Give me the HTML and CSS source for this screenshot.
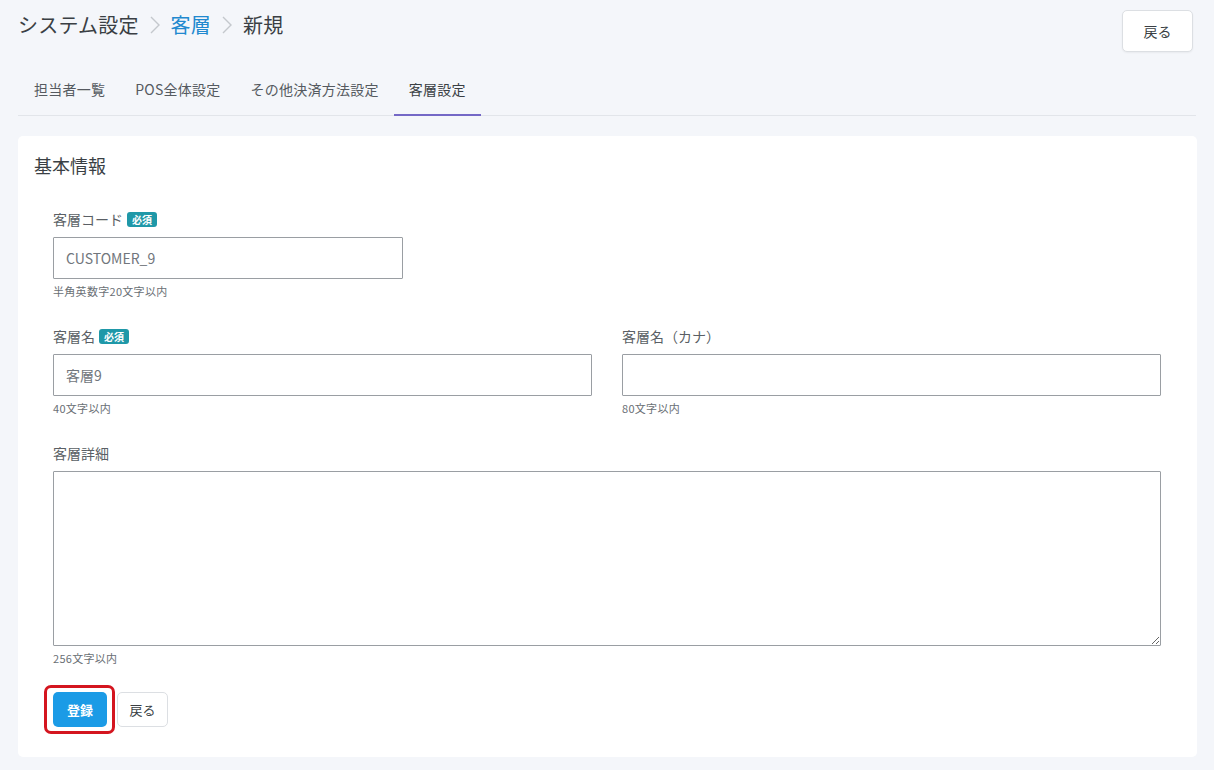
FILE: index.html
```html
<!DOCTYPE html>
<html lang="ja">
<head>
<meta charset="utf-8">
<title>客層 新規</title>
<link rel="stylesheet" href="styles.css">
</head>
<body>
<div class="page">
  <header class="topbar">
    <h1 class="crumbs">
      <span class="crumb">システム設定</span>
      <svg class="chev" width="14" height="20" viewBox="0 0 14 20"><path d="M3 2 L11 10 L3 18" fill="none" stroke="#c4c8cd" stroke-width="1.4"/></svg>
      <span class="crumb link">客層</span>
      <svg class="chev" width="14" height="20" viewBox="0 0 14 20"><path d="M3 2 L11 10 L3 18" fill="none" stroke="#c4c8cd" stroke-width="1.4"/></svg>
      <span class="crumb">新規</span>
    </h1>
    <button class="btn btn-light btn-back-top">戻る</button>
  </header>

  <nav class="tabs">
    <a class="tab">担当者一覧</a>
    <a class="tab">POS全体設定</a>
    <a class="tab">その他決済方法設定</a>
    <a class="tab active">客層設定</a>
  </nav>

  <section class="card">
    <h2 class="card-title">基本情報</h2>
    <div class="fields">
      <div class="row">
        <div class="field half-narrow">
          <label class="label">客層コード<span class="badge">必須</span></label>
          <input class="input" type="text" value="CUSTOMER_9">
          <div class="help">半角英数字20文字以内</div>
        </div>
      </div>
      <div class="row two">
        <div class="field">
          <label class="label">客層名<span class="badge">必須</span></label>
          <input class="input" type="text" value="客層9">
          <div class="help">40文字以内</div>
        </div>
        <div class="field">
          <label class="label">客層名（カナ）</label>
          <input class="input" type="text" value="">
          <div class="help">80文字以内</div>
        </div>
      </div>
      <div class="row">
        <div class="field full">
          <label class="label">客層詳細</label>
          <textarea class="textarea"></textarea>
          <div class="help">256文字以内</div>
        </div>
      </div>
      <div class="actions">
        <span class="highlight"><button class="btn btn-primary">登録</button></span>
        <button class="btn btn-light btn-back">戻る</button>
      </div>
    </div>
  </section>
</div>
</body>
</html>
```

FILE: styles.css
```css
* { box-sizing: border-box; }
html, body { margin: 0; padding: 0; }
body {
  background: #f4f6fa;
  font-family: "Noto Sans CJK JP", "Noto Sans", sans-serif;
  color: #3d4246;
  width: 1214px;
  height: 770px;
  overflow: hidden;
}
.page { padding: 10px 17px 0 18px; }

.topbar {
  display: flex;
  justify-content: space-between;
  align-items: flex-start;
  height: 60px;
}
.crumbs {
  margin: 0;
  display: flex;
  align-items: center;
  gap: 9px;
  font-size: 20px;
  font-weight: 400;
  line-height: 30px;
  color: #3a3f44;
  letter-spacing: 0.2px;
}
.crumb.link { color: #2189cf; }

.btn {
  font-family: inherit;
  cursor: pointer;
  border-radius: 5px;
}
.btn-light {
  background: #fff;
  border: 1px solid #dcdfe3;
  color: #3a3f44;
}
.btn-back-top {
  width: 71px;
  height: 42px;
  font-size: 14px;
  margin-right: 4px;
  box-shadow: 0 1px 2px rgba(0,0,0,0.05);
}

.tabs {
  display: flex;
  border-bottom: 1px solid #e2e5ea;
  height: 46px;
  margin-right: 1px;
  padding-left: 1px;
}
.tab {
  display: block;
  padding: 9px 15px 0;
  font-size: 14px;
  line-height: 20px;
  letter-spacing: 0.25px;
  color: #555a60;
  margin-bottom: -1px;
}
.tab.active {
  color: #3a3f44;
  border-bottom: 2px solid #7468c6;
}

.card {
  margin-top: 20px;
  background: #fff;
  border-radius: 5px;
  height: 621px;
  padding: 16px 36px 0 16px;
}
.card-title {
  margin: 0;
  font-size: 18px;
  font-weight: 400;
  line-height: 26px;
  color: #3a3f44;
}
.fields { padding: 32px 0 0 19px; }

.row { display: flex; gap: 30px; margin-bottom: 29px; }
.row.two .field { flex: 1; }
.field { display: flex; flex-direction: column; }
.half-narrow { width: 350px; }
.full { flex: 1; }

.label {
  display: flex;
  align-items: center;
  font-size: 14px;
  line-height: 19px;
  color: #5a5f65;
  margin-bottom: 8px;
}
.badge {
  display: inline-block;
  margin-left: 4px;
  background: #1f98a8;
  color: #fff;
  font-size: 10px;
  font-weight: 700;
  line-height: 15px;
  padding: 0 5px;
  border-radius: 3px;
}
.input {
  height: 42px;
  width: 100%;
  border: 1px solid #9a9ea3;
  border-radius: 1px;
  padding: 0 12px;
  font-family: inherit;
  font-size: 14px;
  color: #71767c;
  background: #fff;
}
.textarea {
  height: 175px;
  width: 100%;
  border: 1px solid #9a9ea3;
  border-radius: 1px;
  font-family: inherit;
  resize: vertical;
  display: block;
}
.help {
  font-size: 11px;
  line-height: 14px;
  letter-spacing: 0.3px;
  color: #6a6f75;
  margin-top: 5px;
}

.actions {
  display: flex;
  align-items: center;
  gap: 2px;
  margin-top: -9px;
  margin-left: -9px;
}
.highlight {
  display: inline-flex;
  padding: 4px 5px 4px 6px;
  border: 3px solid #d4151f;
  border-radius: 7px;
}
.btn-primary {
  width: 54px;
  height: 35px;
  background: #1b9be6;
  border: none;
  color: #fff;
  font-size: 13px;
  font-weight: 700;
}
.btn-back {
  width: 51px;
  height: 35px;
  font-size: 13px;
}
```
